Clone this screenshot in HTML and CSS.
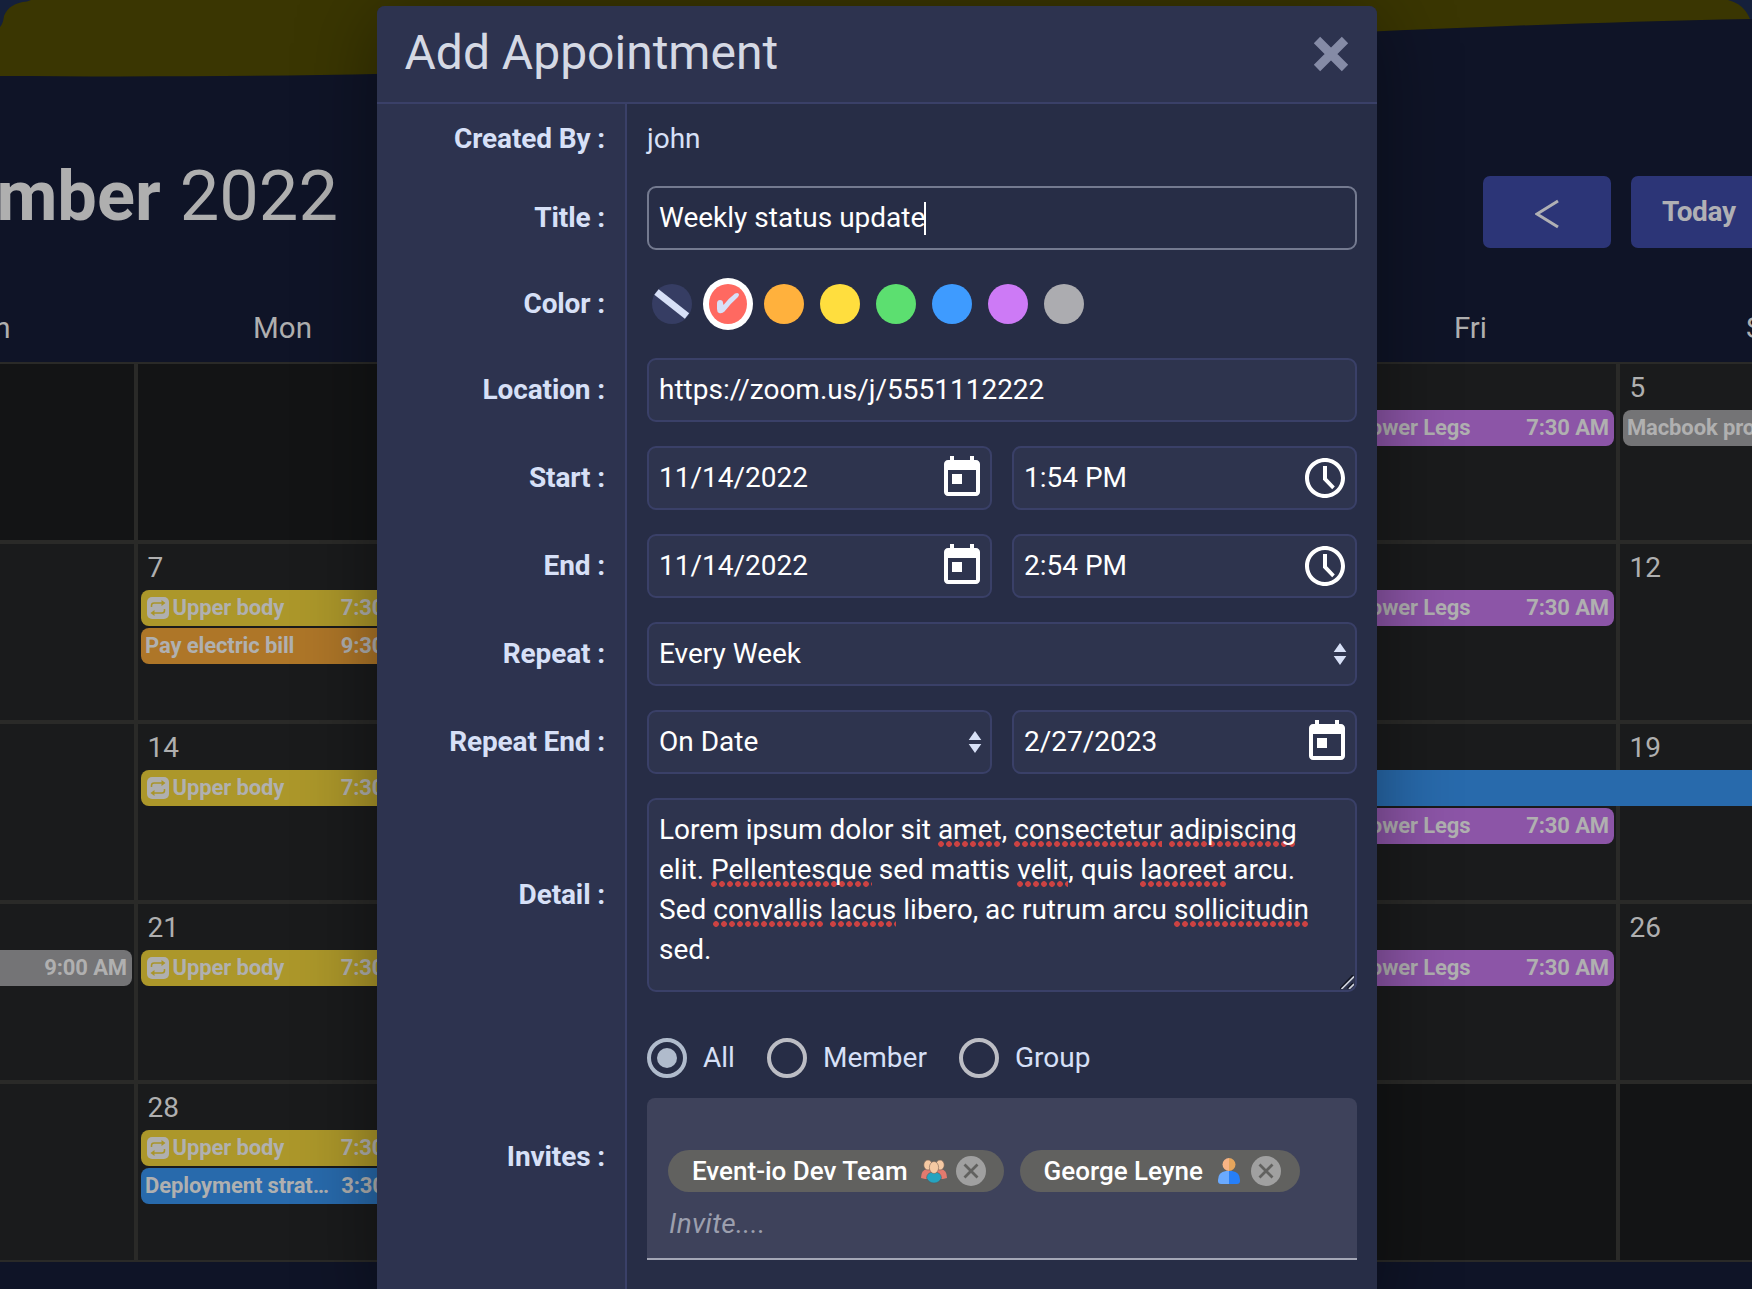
FILE: index.html
```html
<!DOCTYPE html>
<html lang="en">
<head>
<meta charset="utf-8">
<title>Add Appointment</title>
<link rel="stylesheet" href="styles.css">
</head>
<body>
<svg class="defs" aria-hidden="true">
  <symbol id="i-today" viewBox="0 0 24 24"><path fill="#fff" d="M19 3h-1V1h-2v2H8V1H6v2H5c-1.11 0-1.99.9-1.99 2L3 19c0 1.1.89 2 2 2h14c1.1 0 2-.9 2-2V5c0-1.1-.9-2-2-2zm0 16H5V8h14v11zM7 10h5v5H7z"/></symbol>
  <symbol id="i-clock" viewBox="0 0 24 24"><path fill="#fff" d="M11.99 2C6.47 2 2 6.48 2 12s4.47 10 9.99 10C17.52 22 22 17.52 22 12S17.52 2 11.99 2zM12 20c-4.42 0-8-3.58-8-8s3.58-8 8-8 8 3.58 8 8-3.58 8-8 8zM13 6h-2v6.9l4.6 4.7 1.3-1.3L13 12.1z"/></symbol>
  <symbol id="i-repeat" viewBox="0 0 22 22"><rect width="22" height="22" rx="5" fill="#afafaf"/><g fill="none" stroke="#a9952a" stroke-width="1.500"><path d="M4.500 10V8.500q0-2.500 2.500-2.500h8"/><path d="M17.500 12V13.500q0 2.500-2.500 2.500H7"/></g><path fill="#a9952a" d="M14.500 3l4 3-4 3zM7.500 13l-4 3 4 3z"/></symbol>
  <symbol id="i-updown" viewBox="0 0 14 22"><path fill="#d7e0f7" d="M7 0l6.300 9H.7zM7 22l6.300-9H.7z"/></symbol>
  <symbol id="i-remove" viewBox="0 0 30 30"><circle cx="15" cy="15" r="15" fill="#a0a0a0"/><path d="M8.500 8.500l13 13M21.500 8.500l-13 13" stroke="#61615f" stroke-width="2.800"/></symbol>
</svg>

<div class="page">
  <svg class="blob" viewBox="0 0 1752 80"><path fill="#15203b" d="M0 0h40v40H0zM1712 0h40v19h-40z"/><path fill="#3a3602" d="M0 27Q3 24 4 16Q9 3 27 1.500L31 0H1728Q1744 4 1750 19C1500 24 1300 35 1000 50C650 67 400 79 0 76z"/></svg>
  <header class="toolbar">
    <h1 class="month"><b>November</b> 2022</h1>
    <div class="nav"><button class="btn prev"><svg width="24" height="30" viewBox="0 0 24 30"><path d="M23 2L2 15l21 13" fill="none" stroke="#b0b0b4" stroke-width="3"/></svg></button><button class="btn">Today</button></div>
  </header>
  <div class="weekdays"><span>Sun</span><span>Mon</span><span></span><span></span><span></span><span>Fri</span><span>Sat</span></div>
  <div class="grid">
    <div class="cell other"></div><div class="cell other"></div><div class="cell"></div><div class="cell"></div><div class="cell"></div>
    <div class="cell"><div class="day"></div><div class="event purple"><svg class="rep"><use href="#i-repeat"/></svg><span>Lower Legs</span><time>7:30 AM</time></div></div>
    <div class="cell"><div class="day">5</div><div class="event gray"><span>Macbook pro</span></div></div>

    <div class="cell"></div>
    <div class="cell"><div class="day">7</div><div class="event yellow"><svg class="rep"><use href="#i-repeat"/></svg><span>Upper body</span><time>7:30 AM</time></div><div class="event orange"><span>Pay electric bill</span><time>9:30 AM</time></div></div>
    <div class="cell"></div><div class="cell"></div><div class="cell"></div>
    <div class="cell"><div class="day"></div><div class="event purple"><svg class="rep"><use href="#i-repeat"/></svg><span>Lower Legs</span><time>7:30 AM</time></div></div>
    <div class="cell"><div class="day">12</div></div>

    <div class="cell"></div>
    <div class="cell"><div class="day">14</div><div class="event yellow"><svg class="rep"><use href="#i-repeat"/></svg><span>Upper body</span><time>7:30 AM</time></div></div>
    <div class="cell"></div><div class="cell"></div><div class="cell"></div>
    <div class="cell"><div class="day"></div><div class="event blue span"></div><div class="event purple"><svg class="rep"><use href="#i-repeat"/></svg><span>Lower Legs</span><time>7:30 AM</time></div></div>
    <div class="cell"><div class="day">19</div><div class="event blue span"></div></div>

    <div class="cell"><div class="day"></div><div class="event gray"><time>9:00 AM</time></div></div>
    <div class="cell"><div class="day">21</div><div class="event yellow"><svg class="rep"><use href="#i-repeat"/></svg><span>Upper body</span><time>7:30 AM</time></div></div>
    <div class="cell"></div><div class="cell"></div><div class="cell"></div>
    <div class="cell"><div class="day"></div><div class="event purple"><svg class="rep"><use href="#i-repeat"/></svg><span>Lower Legs</span><time>7:30 AM</time></div></div>
    <div class="cell"><div class="day">26</div></div>

    <div class="cell"></div>
    <div class="cell"><div class="day">28</div><div class="event yellow"><svg class="rep"><use href="#i-repeat"/></svg><span>Upper body</span><time>7:30 AM</time></div><div class="event blue"><span>Deployment strat…</span><time>3:30 PM</time></div></div>
    <div class="cell"></div><div class="cell"></div><div class="cell other"></div><div class="cell other"></div><div class="cell other"></div>
  </div>
</div>

<section class="modal">
  <header class="modal-head">
    <h2>Add Appointment</h2>
    <svg width="36" height="36" viewBox="0 0 36 36"><path d="M4 4l28 28M32 4L4 32" stroke="#858ba6" stroke-width="9"/></svg>
  </header>
  <div class="row created"><div class="label">Created By :</div><div class="content plain">john</div></div>
  <div class="row"><div class="label">Title :</div><div class="content"><div class="field focus">Weekly status update<i class="caret"></i></div></div></div>
  <div class="row colors"><div class="label">Color :</div><div class="content swatches">
    <svg class="sw" viewBox="0 0 40 40"><circle cx="20" cy="20" r="20" fill="#363d63"/><path d="M4.500 8L35 32" stroke="#d7e0f7" stroke-width="7"/></svg>
    <svg class="sw" viewBox="0 0 40 40"><ellipse cx="20" cy="20" rx="25" ry="26" fill="#fff"/><ellipse cx="20" cy="20" rx="19" ry="20" fill="#ff6961"/><path fill="#d7e0f7" d="M9 19.500Q9 16 12 16Q15 16 15 19L15.500 21Q21 14 27 9.500Q30.500 8 31 10.500Q31 12 29.500 13.500Q22 20 16.500 27.500Q14 30 11 29Q9 28 9 25z"/></svg>
    <span class="sw c-orange"></span><span class="sw c-yellow"></span><span class="sw c-green"></span><span class="sw c-blue"></span><span class="sw c-purple"></span><span class="sw c-gray"></span>
  </div></div>
  <div class="row"><div class="label">Location :</div><div class="content"><div class="field">https://zoom.us/j/5551112222</div></div></div>
  <div class="row"><div class="label">Start :</div><div class="content pair"><div class="field cal">11/14/2022<svg class="ico"><use href="#i-today"/></svg></div><div class="field clk">1:54 PM<svg class="ico"><use href="#i-clock"/></svg></div></div></div>
  <div class="row"><div class="label">End :</div><div class="content pair"><div class="field cal">11/14/2022<svg class="ico"><use href="#i-today"/></svg></div><div class="field clk">2:54 PM<svg class="ico"><use href="#i-clock"/></svg></div></div></div>
  <div class="row"><div class="label">Repeat :</div><div class="content"><div class="field sel">Every Week<svg class="arrows"><use href="#i-updown"/></svg></div></div></div>
  <div class="row"><div class="label">Repeat End :</div><div class="content pair"><div class="field sel">On Date<svg class="arrows"><use href="#i-updown"/></svg></div><div class="field cal">2/27/2023<svg class="ico"><use href="#i-today"/></svg></div></div></div>
  <div class="row detail"><div class="label">Detail :</div><div class="content"><div class="field area">Lorem ipsum dolor sit <u>amet</u>, <u>consectetur</u> <u>adipiscing</u><br>elit. <u>Pellentesque</u> sed mattis <u>velit</u>, quis <u>laoreet</u> arcu.<br>Sed <u>convallis</u> <u>lacus</u> libero, ac rutrum arcu <u>sollicitudin</u><br>sed.<svg class="grip" viewBox="0 0 14 14"><path d="M0 13.500L13 0M7.500 13.500L13 8" stroke="#10131f" stroke-width="1.500"/><path d="M1.500 14L14 1.500M9 14L14 9" stroke="#d0d3dc" stroke-width="1.600"/></svg></div></div></div>
  <div class="row invites"><div class="label">Invites :</div><div class="content">
    <div class="radios"><span class="radio on"></span><span class="r-all">All</span><span class="radio"></span><span class="r-member">Member</span><span class="radio"></span><span>Group</span></div>
    <div class="invite-box">
      <div class="chips">
        <span class="chip">Event-io Dev Team<svg class="who" viewBox="0 0 28 28"><path fill="#e27a6e" d="M1 21Q1 13 7 12h14q6 1 6 9l-4 1H5z"/><g fill="#f5c9a3" stroke="#7a6355" stroke-width=".6"><ellipse cx="8" cy="8" rx="4.200" ry="5"/><ellipse cx="20" cy="8" rx="4.200" ry="5"/></g><path fill="#25a3c0" stroke="#555" stroke-width=".5" d="M6.500 21Q7 15 14 15t7.500 6Q19 26 14 26T6.500 21z"/><ellipse cx="14" cy="10.500" rx="4.600" ry="6" fill="#f5c9a3" stroke="#7a6355" stroke-width=".6"/></svg><svg class="rm"><use href="#i-remove"/></svg></span>
        <span class="chip">George Leyne<svg class="who" viewBox="0 0 28 28"><path fill="#6aaaff" d="M14 14H11Q3 15 3 23v1q0 3 3 3h8z"/><path fill="#267ff8" d="M14 14h3q8 1 8 9v1q0 3-3 3h-8z"/><path fill="#f8b485" d="M14 1a6.500 6.500 0 0 0 0 13z"/><path fill="#e5a55c" d="M14 1a6.500 6.500 0 0 1 0 13z"/></svg><svg class="rm"><use href="#i-remove"/></svg></span>
      </div>
      <div class="placeholder">Invite....</div>
    </div>
  </div></div>
</section>
</body>
</html>
```

FILE: styles.css
```css
* { box-sizing: border-box; }
body { margin: 0; width: 1752px; height: 1289px; overflow: hidden; background: #0f1427; font: 28px/40px Roboto, sans-serif; color: #b0b0b0; }
h1, h2 { margin: 0; font-weight: 400; }
.defs { position: absolute; width: 0; height: 0; }
.page { width: 1752px; height: 1289px; overflow: hidden; }
.blob { display: block; width: 1752px; height: 80px; }
.toolbar { height: 232px; display: flex; justify-content: space-between; padding: 74px 0 0; }
.month { width: 338px; display: flex; justify-content: flex-end; gap: 19px; font-size: 70.4px; line-height: 84px; white-space: nowrap; color: #afafaf; }
.month b { font-weight: 700; }
.nav { width: 269px; display: flex; gap: 20px; padding-top: 22px; }
.btn { flex: none; width: 148px; height: 72px; padding: 0 0 0 31px; border: 0; border-radius: 7px; background: #2c3577; color: #b0b0b4; font: 700 28px/72px Roboto, sans-serif; letter-spacing: -.35px; text-align: left; }
.prev { width: 128px; padding: 4px 0 0 52px; display: flex; align-items: center; }
.weekdays { display: grid; grid-template-columns: repeat(7, 297px); margin-left: -163px; height: 50px; text-align: center; font-size: 29.5px; line-height: 32px; width: 2079px; color: #afafaf; }
.grid { display: grid; grid-template-columns: repeat(7, 296.4px); grid-auto-rows: 180px; margin-left: -160.4px; width: 2074.8px; }
.cell { border: 2px solid #2a2a28; background: #1a1b1c; padding: 0 2px 0 3px; min-width: 0; display: flex; flex-direction: column; gap: 2px; }
.other { background: #131415; }
.day { height: 44px; padding: 4px 0 0 6.5px; color: #afafaf; }
.event { height: 36px; border-radius: 8px; padding: 0 5px 0 4px; display: flex; align-items: center; font-size: 22px; line-height: 36px; font-weight: 700; letter-spacing: -.12px; white-space: nowrap; flex: none; overflow: hidden; }
.event time { margin-left: auto; }
.rep { width: 22px; height: 22px; flex: none; margin: 0 3.5px 0 2px; }
.yellow { background: #ac972a; }
.orange { background: #ae7628; }
.blue { background: #286aac; }
.purple { background: #8c55a7; }
.gray { background: #747476; }
.span { margin: 0 -4px 0 -5px; border-radius: 0; }

.modal { position: absolute; left: 377px; top: 6px; width: 1000px; height: 1304px; border-radius: 8px 8px 0 0; background: #272d46; box-shadow: 0 10px 80px rgba(0, 0, 0, .4); overflow: hidden; color: #d7e0f7; }
.modal-head { height: 98px; background: #2d334f; border-bottom: 2px solid #3a4068; display: flex; align-items: center; justify-content: space-between; padding: 0 28.5px 0 27.5px; }
.modal-head h2 { font-size: 48px; line-height: 56px; color: #d5d9e4; padding-bottom: 2px; }
.row { display: grid; grid-template-columns: 250px 1fr; height: 88px; }
.created { height: 70px; }
.colors { height: 84px; }
.detail { height: 218px; }
.invites { height: 306px; }
.label { background: #2d334f; border-right: 2px solid #3a4068; padding-right: 20px; display: flex; align-items: center; justify-content: flex-end; font-weight: 700; letter-spacing: -.13px; }
.content { padding: 12px 20px; display: flex; gap: 20px; min-width: 0; }
.plain { align-items: center; }
.field { flex: 1 1 0; min-width: 0; border: 2px solid #3a4068; border-radius: 9px; background: #2e344e; color: #fff; padding: 0 10px; display: flex; align-items: center; white-space: nowrap; }
.pair .field { flex: 0 0 345px; }
.focus { background: #272d46; border-color: #747a90; }
.caret { width: 2px; height: 33px; margin-left: -1px; background: #fff; }
.ico { width: 48px; height: 48px; margin-left: auto; flex: none; }
.cal { padding-right: 4px; }
.clk { padding-right: 6px; }
.sel { padding-right: 8px; }
.arrows { width: 14px; height: 22px; margin-left: auto; }
.swatches { gap: 16px; padding-left: 25px; align-items: center; }
.sw { width: 40px; height: 40px; border-radius: 50%; overflow: visible; flex: none; }
.c-orange { background: #ffb13d; }
.c-yellow { background: #ffde3e; }
.c-green { background: #5cdf70; }
.c-blue { background: #3e9bff; }
.c-purple { background: #cd7af6; }
.c-gray { background: #acacb0; }
.area { display: block; position: relative; padding-top: 10px; }
.area u { text-decoration: none; padding-bottom: 1px; background: radial-gradient(circle at 3px 3px, #cc4242 2.500px, transparent 3.200px) left bottom / 8px 6px repeat-x; }
.grip { position: absolute; right: 1px; bottom: 1px; width: 14px; height: 14px; }
.invites .content { flex-direction: column; padding-top: 34px; }
.radios { display: flex; align-items: center; height: 40px; flex: none; }
.radio { width: 40px; height: 40px; border: 4px solid #bcbdc4; border-radius: 50%; margin-right: 16px; display: flex; align-items: center; justify-content: center; }
.on { border-color: #b0bbcc; }
.on::after { content: ""; width: 20px; height: 20px; border-radius: 50%; background: #b0bbcc; }
.r-all { width: 64px; }
.r-member { width: 136px; }
.invite-box { height: 162px; flex: none; border-radius: 8px 8px 0 0; border-bottom: 2px solid #a4a7b6; background: #3e425b; padding: 52px 21px 0; }
.chips { display: flex; gap: 16px; }
.chip { height: 42px; border-radius: 21px; background: #61615f; color: #fff; font-weight: 500; font-size: 26px; display: flex; align-items: center; padding: 0 19px 0 24px; white-space: nowrap; }
.chip:first-child { padding-right: 18px; }
.who { width: 28px; height: 28px; margin: 0 8px 0 12px; }
.rm { width: 30px; height: 30px; }
.placeholder { font-style: italic; color: #9c9fae; padding: 12px 0 0 1px; letter-spacing: .25px; }
```
